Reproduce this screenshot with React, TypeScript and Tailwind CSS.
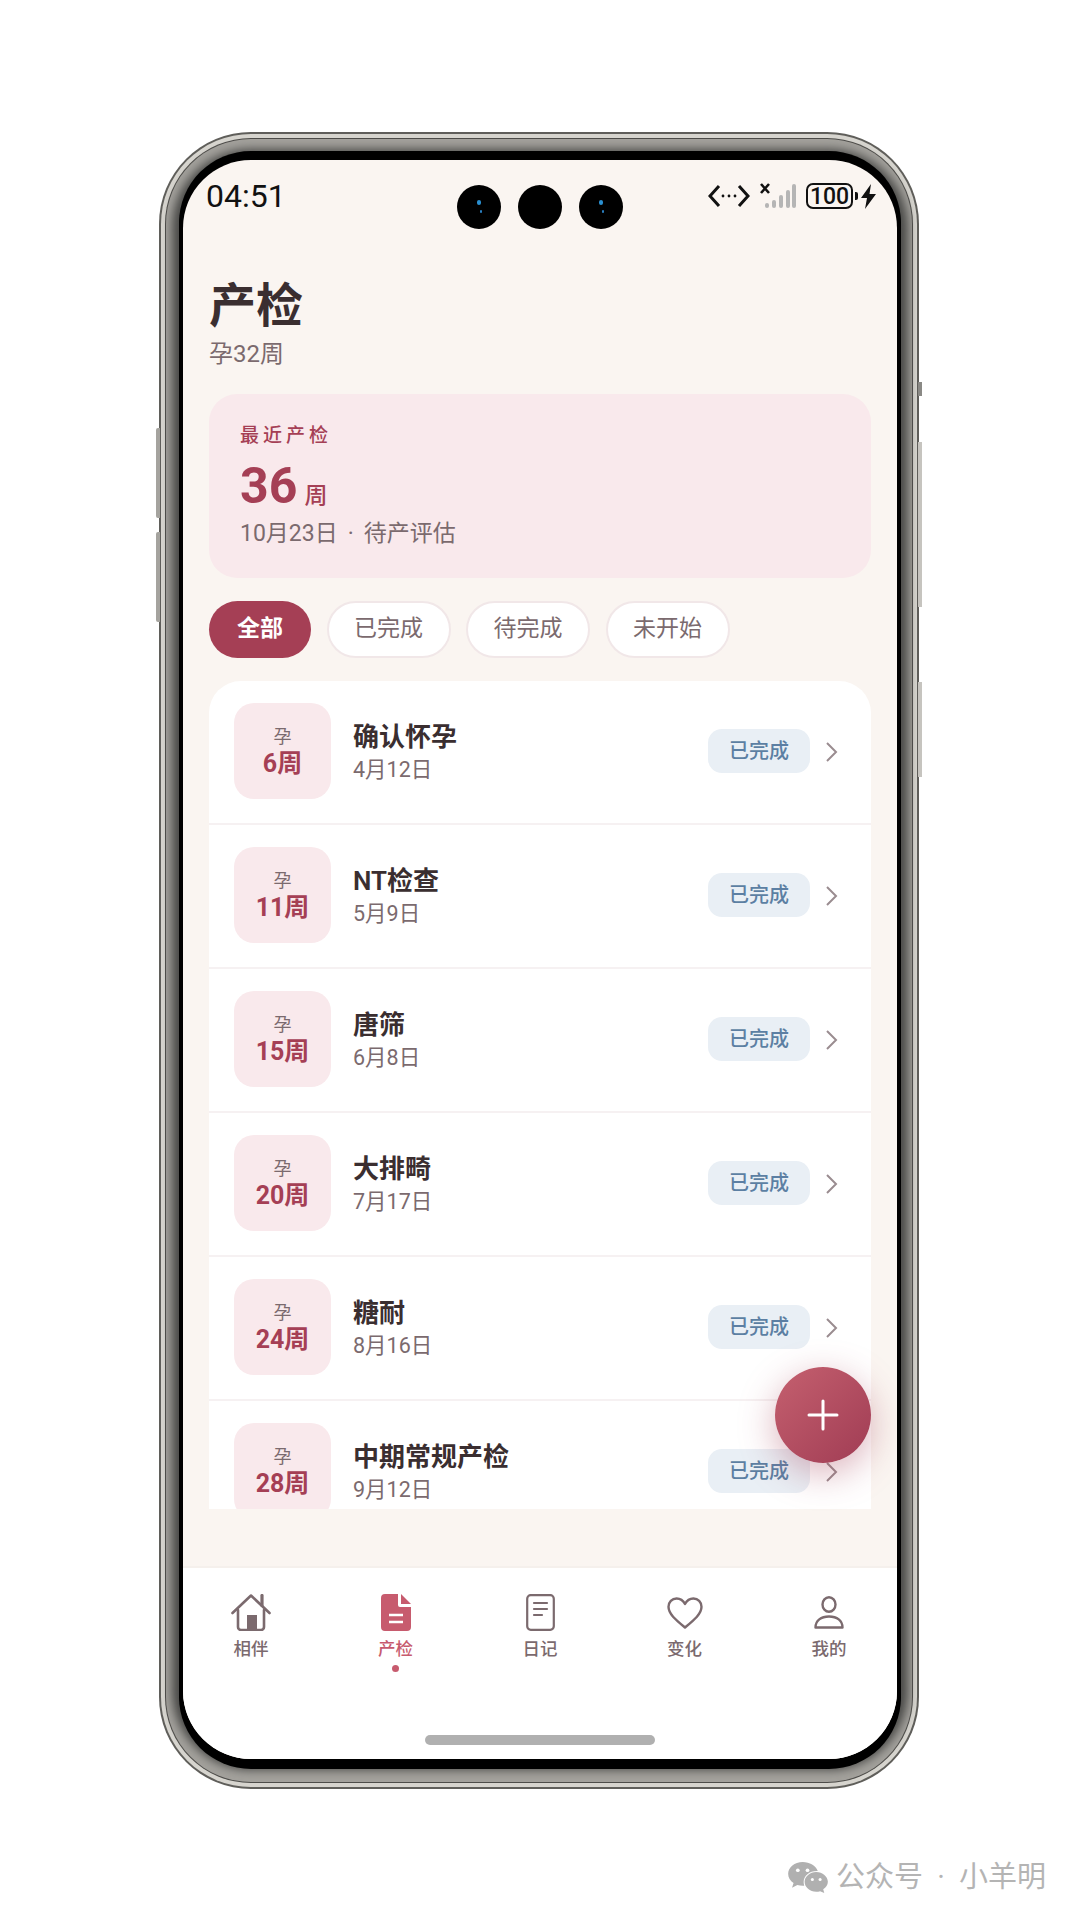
const rows = [
  { w: "6周", t: "确认怀孕", d: "4月12日" },
  { w: "11周", t: "NT检查", d: "5月9日" },
  { w: "15周", t: "唐筛", d: "6月8日" },
  { w: "20周", t: "大排畸", d: "7月17日" },
  { w: "24周", t: "糖耐", d: "8月16日" },
  { w: "28周", t: "中期常规产检", d: "9月12日" },
];

function Lens({ blue }: { blue?: boolean }) {
  return (
    <div className="relative w-[44px] h-[44px] rounded-full bg-black">
      {blue && <div className="absolute left-[20px] top-[15px] w-[4px] h-[5px] rounded-full bg-[#2a8fd0]" />}
      {blue && <div className="absolute left-[23px] top-[25px] w-[2px] h-[3px] rounded-full bg-[#2a7fc0]" />}
    </div>
  );
}

function StatusIcons() {
  return (
    <div className="flex items-center">
      <svg width="42" height="24" viewBox="0 0 42 24" fill="none" stroke="#111" strokeWidth="3" className="mr-[10px]">
        <path d="M11 2 2 12l9 10M31 2l9 10-9 10" />
        <circle cx="15" cy="12" r="1.4" fill="#111" stroke="none" />
        <circle cx="21" cy="12" r="1.4" fill="#111" stroke="none" />
        <circle cx="27" cy="12" r="1.4" fill="#111" stroke="none" />
      </svg>
      <svg width="36" height="26" viewBox="0 0 36 26" className="mr-[10px]">
        <path d="M1 1l8 9M9 1l-8 9" stroke="#111" strokeWidth="2.6" />
        <rect x="5" y="20" width="4" height="5" rx="2" fill="#b5b5b5" />
        <rect x="12" y="17" width="4" height="8" rx="2" fill="#b5b5b5" />
        <rect x="19" y="12" width="4" height="13" rx="2" fill="#b5b5b5" />
        <rect x="26" y="7" width="4" height="18" rx="2" fill="#b5b5b5" />
        <rect x="32" y="1" width="4" height="24" rx="2" fill="#b5b5b5" />
      </svg>
      <div className="w-[47px] h-[26px] rounded-[7px] border-[2px] border-[#111] flex items-center justify-center text-[23px] leading-none font-medium text-[#111]">
        100
      </div>
      <div className="w-[3px] h-[8px] ml-[2px] rounded-r-[2px] bg-[#111]" />
      <svg width="15" height="25" viewBox="0 0 15 25" className="ml-[3px]">
        <path d="M10 0 0 14h6l-2 11L15 10H8.5z" fill="#111" />
      </svg>
    </div>
  );
}

function Home() {
  return (
    <svg width="40" height="37" viewBox="0 0 40 37" fill="none" stroke="#7b6a6e" strokeWidth="2.6" strokeLinecap="round" strokeLinejoin="round">
      <path d="M1.5 19 20 1.5 38.5 19" />
      <path d="M31 1.5v10" strokeWidth="3.2" />
      <path d="M7 16v17a3 3 0 0 0 3 3h20a3 3 0 0 0 3-3V16" />
      <path d="M16 21h10v15H16z" fill="#7b6a6e" stroke="none" />
    </svg>
  );
}

function Doc() {
  return (
    <svg width="30" height="37" viewBox="0 0 30 37">
      <path d="M4 0h13v11a2 2 0 0 0 2 2h11v20a4 4 0 0 1-4 4H4a4 4 0 0 1-4-4V4a4 4 0 0 1 4-4z" fill="#c75b6e" />
      <path d="M20 0l10 10H20z" fill="#c75b6e" />
      <path d="M8 21h14M8 28h14" stroke="#fff" strokeWidth="2.4" />
    </svg>
  );
}

function Diary() {
  return (
    <svg width="29" height="37" viewBox="0 0 29 37" fill="none" stroke="#7b6a6e" strokeWidth="2.2" strokeLinecap="round">
      <rect x="1.2" y="1.2" width="26.6" height="34.6" rx="3.5" />
      <path d="M8 9h13M8 15h13M8 21h8" />
    </svg>
  );
}

function Heart() {
  return (
    <svg width="36" height="32" viewBox="0 0 36 32" fill="none" stroke="#7b6a6e" strokeWidth="2.4" strokeLinejoin="round">
      <path d="M18 30.5C9 23 1.5 17 1.5 9.8 1.5 5 5 1.5 9.6 1.5c3.4 0 6.6 2 8.4 5.4 1.8-3.4 5-5.4 8.4-5.4 4.6 0 8.1 3.5 8.1 8.3C34.5 17 27 23 18 30.5z" />
    </svg>
  );
}

function Person() {
  return (
    <svg width="30" height="33" viewBox="0 0 30 33" fill="none" stroke="#7b6a6e" strokeWidth="2.4" strokeLinejoin="round">
      <ellipse cx="15" cy="8.5" rx="6.5" ry="7.2" />
      <path d="M1.5 31.5c0-7 5.5-11 13.5-11s13.5 4 13.5 11z" />
    </svg>
  );
}

function WeChat() {
  return (
    <svg width="40" height="31" viewBox="0 0 41 32">
      <path d="M15 0C6.7 0 0 5.4 0 12.2c0 3.9 2.1 7.3 5.6 9.6L4 26.5l5.5-2.8c1.8.5 3.6.8 5.5.8.6 0 1 0 1.6-.1-.4-1.2-.6-2.4-.6-3.7 0-6.4 6-11.4 13.6-11.4h1C28.5 3.7 22.3 0 15 0z" fill="#b0b0b0" />
      <circle cx="10" cy="8.5" r="1.9" fill="#fff" />
      <circle cx="20" cy="8.5" r="1.9" fill="#fff" />
      <path d="M41 20.5c0-5.7-5.5-10.3-12-10.3s-12 4.6-12 10.3 5.5 10.3 12 10.3c1.4 0 2.7-.2 4-.6l4.3 1.8-1.1-3.8c2.9-1.9 4.8-4.7 4.8-7.7z" fill="#b0b0b0" />
      <circle cx="25" cy="18" r="1.6" fill="#fff" />
      <circle cx="33" cy="18" r="1.6" fill="#fff" />
    </svg>
  );
}

function Row({ w, t, d }: { w: string; t: string; d: string }) {
  return (
    <div className="flex items-center shrink-0 h-[144px] pl-[25px] pr-[32px] pt-[22px] pb-[24px] border-b-[2px] border-[#f6f1f2]">
      <div className="w-[97px] h-[96px] shrink-0 rounded-[20px] bg-[#f9e9ec] flex flex-col items-center pt-[22px]">
        <div className="text-[18px] leading-[24px] text-[#7b6a6e]">孕</div>
        <div className="text-[25px] leading-[30px] font-bold text-[#a53f55]">{w}</div>
      </div>
      <div className="ml-[22px] flex-1">
        <div className="text-[26px] leading-[34px] font-semibold text-[#3a2e30]">{t}</div>
        <div className="text-[21.5px] leading-[26px] mt-[3px] text-[#7b6a6e]">{d}</div>
      </div>
      <div className="w-[102px] h-[44px] rounded-[14px] bg-[#e9eff5] flex items-center justify-center text-[20px] font-medium text-[#5c7fa3]">
        已完成
      </div>
      <svg width="14" height="22" viewBox="0 0 14 22" fill="none" stroke="#9a8c90" strokeWidth="2" className="ml-[15px] mt-[2px]">
        <path d="M2 2l9 9-9 9" />
      </svg>
    </div>
  );
}

function NavItem({ icon, label, active }: { icon: React.ReactNode; label: string; active?: boolean }) {
  return (
    <div className="w-[72px] flex flex-col items-center">
      <div className="h-[37px] flex items-center justify-center">{icon}</div>
      <div className={`mt-[6px] text-[17.5px] leading-[24px] font-medium ${active ? "text-[#c75b6e]" : "text-[#7b6a6e]"}`}>{label}</div>
      {active && <div className="mt-[4px] w-[7px] h-[7px] rounded-full bg-[#c75b6e]" />}
    </div>
  );
}

export default function App() {
  return (
    <div className="w-[1080px] h-[1920px] bg-white overflow-hidden pt-[132px] pl-[159px] font-['Roboto','Noto_Sans_CJK_SC',sans-serif]">
      <div className="relative w-[760px] h-[1657px]">
        <div className="absolute left-[-3px] top-[296px] w-[4px] h-[90px] rounded-l-[2px] bg-[#a5a39e]" />
        <div className="absolute left-[-3px] top-[400px] w-[4px] h-[90px] rounded-l-[2px] bg-[#a5a39e]" />
        <div className="absolute right-[-3px] top-[250px] w-[4px] h-[14px] bg-[#8a8985]" />
        <div className="absolute right-[-3px] top-[310px] w-[4px] h-[165px] bg-[#c6c4bf]" />
        <div className="absolute right-[-3px] top-[550px] w-[4px] h-[95px] bg-[#c6c4bf]" />
        <div className="w-full h-full rounded-[92px] bg-[#5f5e5a] p-[2px]">
          <div className="w-full h-full rounded-[90px] bg-[#d6d4ce] p-[4px]">
            <div className="w-full h-full rounded-[86px] bg-[#4d4c49] p-[1px]">
              <div className="w-full h-full rounded-[85px] bg-[#a3a19c] pl-[17px] pr-[15px] pt-[21px] pb-[23px]">
                <div className="relative w-full h-full rounded-[68px] bg-[#faf5f1] overflow-hidden shadow-[0_-5px_0_4px_#000,0_6px_0_4px_#000,0_0_0_4px_#000,0_0_10px_11px_#4a4a48] flex flex-col">
                  <div className="absolute left-[274px] top-[25px] flex gap-[17px]">
                    <Lens blue />
                    <Lens />
                    <Lens blue />
                  </div>

                  <div className="flex items-center justify-between pl-[23px] pr-[21px] pt-[23px]">
                    <div className="text-[32px] leading-[26px] text-[#111]">04:51</div>
                    <StatusIcons />
                  </div>

                  <div className="pl-[26px] pt-[69px]">
                    <div className="text-[47px] leading-[56px] font-bold text-[#3a2e30]">产检</div>
                    <div className="text-[24px] leading-[30px] text-[#7b6a6e] mt-[5px]">孕32周</div>
                  </div>

                  <div className="mx-[26px] mt-[25px] h-[184px] shrink-0 rounded-[28px] bg-[#f9e9ec] pl-[31px] pt-[29px]">
                    <div className="text-[19px] leading-[26px] font-medium tracking-[4px] text-[#a53f55]">最近产检</div>
                    <div className="flex items-baseline mt-[10px]">
                      <div className="text-[50px] leading-[54px] font-bold text-[#a53f55]">36</div>
                      <div className="text-[23px] leading-[30px] font-medium text-[#a53f55] ml-[7px]">周</div>
                    </div>
                    <div className="flex text-[23px] leading-[30px] text-[#7b6a6e] mt-[6px]">
                      <span>10月23日</span>
                      <span className="w-[26px] text-center">·</span>
                      <span>待产评估</span>
                    </div>
                  </div>

                  <div className="flex mx-[26px] mt-[23px] gap-[15.5px]">
                    <div className="w-[102px] h-[57px] rounded-full bg-[#a53f55] flex items-center justify-center text-[23px] font-bold text-white">全部</div>
                    {["已完成", "待完成", "未开始"].map((c) => (
                      <div key={c} className="w-[124px] h-[57px] rounded-full bg-white border-[2px] border-[#f1e7e8] flex items-center justify-center text-[23px] text-[#7b6a6e]">
                        {c}
                      </div>
                    ))}
                  </div>

                  <div className="mx-[26px] mt-[23px] h-[828px] shrink-0 rounded-t-[32px] bg-white overflow-hidden flex flex-col">
                    {rows.map((r) => (
                      <Row key={r.w} {...r} />
                    ))}
                  </div>

                  <div className="absolute left-[592px] top-[1207px] w-[96px] h-[96px] rounded-full bg-gradient-to-br from-[#c5606f] to-[#a03c54] shadow-[0_10px_36px_rgba(165,63,85,0.4)] flex items-center justify-center">
                    <svg width="32" height="32" viewBox="0 0 32 32" stroke="#fff" strokeWidth="3" strokeLinecap="round">
                      <path d="M16 2v28M2 16h28" />
                    </svg>
                  </div>

                  <div className="flex-1" />

                  <div className="h-[193px] shrink-0 bg-white border-t-[2px] border-[#f5f0ec] relative">
                    <div className="flex justify-between px-[32px] pt-[26px]">
                      <NavItem icon={<Home />} label="相伴" />
                      <NavItem icon={<Doc />} label="产检" active />
                      <NavItem icon={<Diary />} label="日记" />
                      <NavItem icon={<Heart />} label="变化" />
                      <NavItem icon={<Person />} label="我的" />
                    </div>
                    <div className="absolute left-[242px] bottom-[14px] w-[230px] h-[10px] rounded-full bg-[#b0b0b0]" />
                  </div>
                </div>
              </div>
            </div>
          </div>
        </div>
      </div>
      <div className="flex items-center justify-end mt-[71px] pr-[34px] text-[29px] leading-[34px] text-[#b4b4b4]">
        <WeChat />
        <div className="flex ml-[8px]">
          <span>公众号</span>
          <span className="w-[36px] text-center">·</span>
          <span>小羊明</span>
        </div>
      </div>
    </div>
  );
}
